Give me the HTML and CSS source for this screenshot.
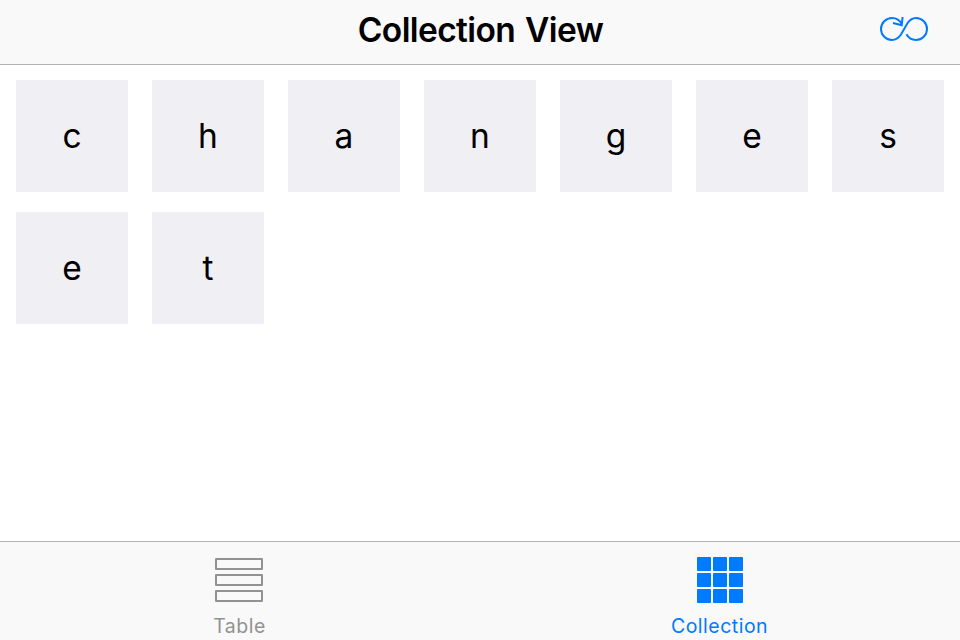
FILE: index.html
```html
<!DOCTYPE html>
<html lang="en">
<head>
<meta charset="utf-8">
<title>Collection View</title>
<link rel="stylesheet" href="styles.css">
</head>
<body>
<header class="navbar">
  <span></span>
  <h1 class="title">Collection View</h1>
  <button class="refresh" aria-label="Shuffle">
    <svg width="52" height="30" viewBox="878 14 52 30" fill="none" stroke="#007aff" stroke-width="2">
      <path d="M902 24.500C900 20.500 896.500 18 892 18C885.900 18 881 22.900 881 29C881 35.100 885.900 40 892 40C896 40 898.500 38 901 34.500L907 24C909.500 20 912 18 916 18C922.100 18 927 22.900 927 29C927 35.100 922.100 40 916 40C912 40 908.500 38 906.500 34.300"/>
      <path d="M902.600 17L901.700 25.200L893 23"/>
    </svg>
  </button>
</header>
<main class="grid">
  <div class="cell">c</div>
  <div class="cell">h</div>
  <div class="cell">a</div>
  <div class="cell">n</div>
  <div class="cell">g</div>
  <div class="cell">e</div>
  <div class="cell">s</div>
  <div class="cell">e</div>
  <div class="cell">t</div>
</main>
<nav class="tabbar">
  <a class="tab">
    <svg class="icon" width="50" height="48" viewBox="0 0 50 48" fill="none" stroke="#929292" stroke-width="2" stroke-linejoin="round">
      <rect x="1" y="3" width="46" height="10"/><rect x="1" y="19" width="46" height="10"/><rect x="1" y="35" width="46" height="10"/>
    </svg>
    <span class="label">Table</span>
  </a>
  <a class="tab active">
    <svg class="icon" width="50" height="48" viewBox="0 0 50 48" fill="#007aff">
      <rect x="2" y="1" width="14" height="14" rx="0.7"/><rect x="18" y="1" width="14" height="14" rx="0.7"/><rect x="34" y="1" width="14" height="14" rx="0.7"/>
      <rect x="2" y="17" width="14" height="14" rx="0.7"/><rect x="18" y="17" width="14" height="14" rx="0.7"/><rect x="34" y="17" width="14" height="14" rx="0.7"/>
      <rect x="2" y="33" width="14" height="14" rx="0.7"/><rect x="18" y="33" width="14" height="14" rx="0.7"/><rect x="34" y="33" width="14" height="14" rx="0.7"/>
    </svg>
    <span class="label">Collection</span>
  </a>
</nav>
</body>
</html>
```
FILE: styles.css
```css
* { box-sizing: border-box; }
body {
  margin: 0;
  height: 640px;
  display: flex;
  flex-direction: column;
  overflow: hidden;
  background: #fff;
  color: #000;
  font-family: Inter, "Liberation Sans", sans-serif;
}
.navbar {
  height: 65px;
  flex: none;
  display: grid;
  grid-template-columns: 1fr auto 1fr;
  align-items: start;
  background: #f9f9f9;
  border-bottom: 1px solid #b2b2b2;
}
.title {
  margin: 0;
  padding: 10px 0 0 1px;
  font-size: 33.5px;
  line-height: 40px;
  font-weight: 600;
  letter-spacing: -0.6px;
  word-spacing: 2px;
}
.refresh {
  justify-self: end;
  margin: 14px 30px 0 0;
  padding: 0;
  border: 0;
  background: none;
}
.refresh svg { display: block; }
.grid {
  flex: 1;
  padding: 15px 16px;
  display: grid;
  grid-template-columns: repeat(7, 112px);
  grid-auto-rows: 112px;
  gap: 20px 24px;
  align-content: start;
}
.cell {
  display: flex;
  align-items: center;
  justify-content: center;
  padding-top: 1px;
  background: #efeff4;
  font-size: 33.5px;
  line-height: 41px;
}
.tabbar {
  height: 99px;
  flex: none;
  display: flex;
  justify-content: space-around;
  background: #f9f9f9;
  border-top: 1px solid #b2b2b2;
}
.tab {
  flex: 1;
  display: flex;
  flex-direction: column;
  align-items: center;
  padding-top: 14px;
  color: #929292;
}
.tab.active { color: #007aff; }
.icon { display: block; flex: none; }
.label {
  margin: 10px 1px 0 0;
  font-size: 19.5px;
  line-height: 24px;
  letter-spacing: 0.5px;
}
```
